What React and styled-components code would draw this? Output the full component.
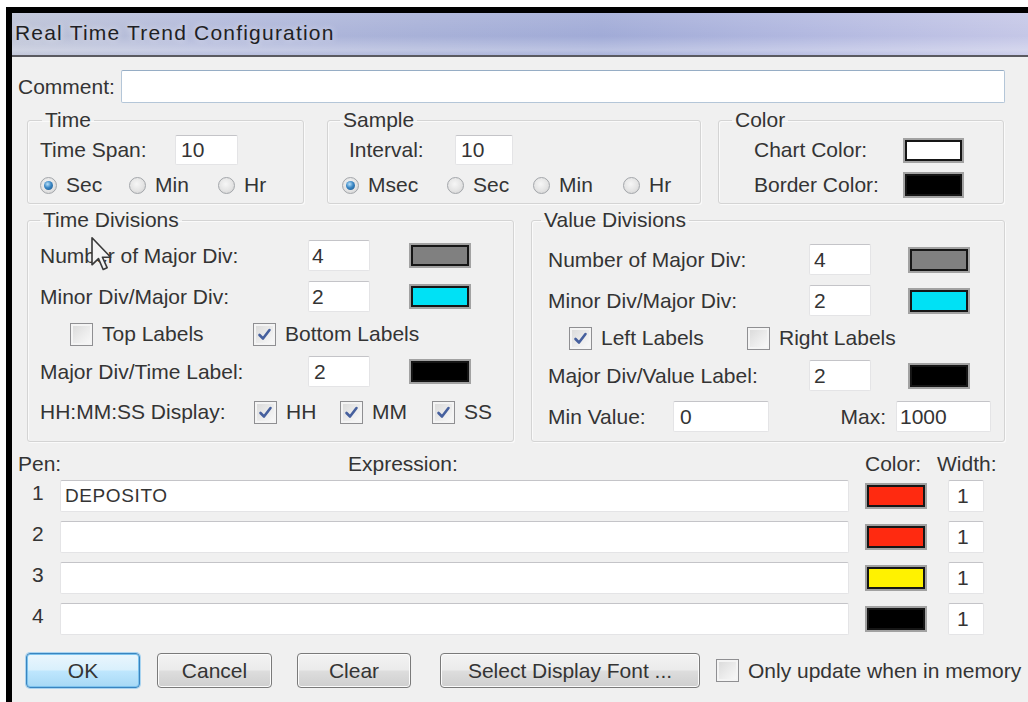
import styled, { createGlobalStyle } from "styled-components";

const GlobalStyle = createGlobalStyle`
  html, body {
    margin: 0;
    padding: 0;
    background: #fff;
  }
  body {
    font-family: "Liberation Sans", Arial, sans-serif;
  }
  * {
    box-sizing: border-box;
  }
`;

const Screen = styled.div`
  position: relative;
  width: 1028px;
  height: 702px;
  padding: 7px 0 0 6px;
  overflow: hidden;
  background: #fff;
`;

const Window = styled.div`
  height: 695px;
  display: flex;
  flex-direction: column;
  border-top: 6px solid #000;
  border-left: 6px solid #000;
  background: #f0f0f0;
`;

const TitleBar = styled.div`
  height: 44px;
  flex: none;
  display: flex;
  align-items: center;
  padding: 0 0 2px 3px;
  border-bottom: 2px solid #5a5a60;
  background:
    linear-gradient(180deg, rgba(255,255,255,0.12) 0%, rgba(255,255,255,0) 55%, rgba(255,255,255,0.28) 88%, rgba(255,255,255,0.1) 100%),
    linear-gradient(90deg, #bcc2d6 0%, #b3badb 18%, #a8b1d8 40%, #a1abd7 58%, #b2b8e0 78%, #c5c7e7 100%);
`;

const Title = styled.span`
  font-size: 21px;
  letter-spacing: 1.2px;
  color: #1f1f24;
  text-shadow: 0 0 6px rgba(255,255,255,0.7);
`;

const Body = styled.div`
  flex: 1;
  padding: 13px 23px 0 6px;
  font-size: 21px;
  color: #343434;
`;

const Row = styled.div`
  display: flex;
  align-items: center;
  height: ${(p) => p.$h || 30}px;
  padding-left: ${(p) => p.$indent || 0}px;
  margin-top: ${(p) => p.$mt || 0}px;
`;

const Label = styled.span`
  flex: none;
  width: ${(p) => (p.$w ? `${p.$w}px` : "auto")};
  margin-left: ${(p) => (p.$push ? "auto" : "0")};
  white-space: nowrap;
`;

const TextBox = styled.input`
  flex: ${(p) => (p.$w ? "none" : "1")};
  width: ${(p) => (p.$w ? `${p.$w}px` : "auto")};
  height: ${(p) => p.$h || 31}px;
  min-width: 0;
  margin-left: ${(p) => p.$ml || 0}px;
  padding: 0 0 0 ${(p) => p.$pad || 5}px;
  font: inherit;
  font-size: ${(p) => p.$fs || 21}px;
  letter-spacing: ${(p) => p.$ls || 0}px;
  color: #343434;
  background: #fff;
  border: 1px solid ${(p) => (p.$blue ? "#b4c6d8" : "#e4e4e6")};
  border-top-color: ${(p) => (p.$blue ? "#96adc5" : "#c4c4c8")};
  border-radius: 2px;
  outline: none;
`;

const TopGroups = styled.div`
  display: flex;
  margin: 7px 1px 0 9px;
`;

const DivGroups = styled.div`
  display: flex;
  align-items: stretch;
  margin: 6px 1px 0 9px;
`;

const Group = styled.fieldset`
  flex: none;
  width: ${(p) => p.$w}px;
  margin: 0 0 0 ${(p) => p.$ml || 0}px;
  padding: ${(p) => p.$pad};
  min-width: 0;
  border: 1px solid #d4d4d4;
  border-radius: 3px;
  box-shadow: inset 1px 1px 0 #fafafa, 1px 1px 0 #fafafa;
`;

/* legend offset is measured from the fieldset's content edge */
const Legend = styled.legend`
  margin-left: ${(p) => p.$indent}px;
  padding: 0 3px;
  line-height: 20px;
  font-size: 21px;
  color: #343434;
`;

const Stack = styled.div`
  display: flex;
  flex-direction: column;
  gap: ${(p) => p.$gap}px;
`;

const Swatch = styled.span`
  flex: none;
  display: inline-block;
  width: ${(p) => p.$w || 62}px;
  height: ${(p) => p.$h || 25}px;
  margin-left: ${(p) => p.$ml || 0}px;
  background: ${(p) => p.$color};
  border: 2px solid #a2a2a2;
  box-shadow: inset 0 0 0 2px #161616;
`;

const Option = styled.label`
  flex: none;
  display: flex;
  align-items: center;
  gap: ${(p) => p.$gap || 9}px;
  width: ${(p) => (p.$w ? `${p.$w}px` : "auto")};
  white-space: nowrap;
`;

const RadioDot = styled.span`
  flex: none;
  position: relative;
  width: 17px;
  height: 17px;
  border-radius: 50%;
  border: 1px solid #a3a6aa;
  background: radial-gradient(circle at 45% 40%, #f6f6f6 0%, #e4e4e4 55%, #cdcdcd 100%);
  &::after {
    content: "";
    display: ${(p) => (p.$on ? "block" : "none")};
    position: absolute;
    left: 3px;
    top: 3px;
    width: 9px;
    height: 9px;
    border-radius: 50%;
    background: radial-gradient(circle at 40% 35%, #b9e1fa 0%, #3a87c4 45%, #184e84 100%);
  }
`;

const CheckBox = styled.span`
  flex: none;
  display: flex;
  align-items: center;
  justify-content: center;
  width: 23px;
  height: 23px;
  border: 1px solid #8f8f92;
  background: linear-gradient(135deg, #d8d8d8 0%, #ececec 55%, #fafafa 100%);
  box-shadow: inset 0 0 0 2px #f4f4f4;
  svg {
    display: block;
  }
`;

const PenSection = styled.div`
  margin-top: 10px;
`;

const PenHeader = styled.div`
  display: grid;
  grid-template-columns: 42px 805px 72px 47px;
  align-items: center;
  height: 24px;
`;

const HeaderCell = styled.span`
  padding-left: ${(p) => p.$pl || 0}px;
  white-space: nowrap;
`;

const PenList = styled.div`
  display: flex;
  flex-direction: column;
  gap: 9px;
  margin-top: 4px;
`;

const PenRow = styled.div`
  display: grid;
  grid-template-columns: 42px 805px 72px 47px;
  align-items: center;
  height: 32px;
`;

const PenNumber = styled.span`
  align-self: start;
  padding: 1px 0 0 14px;
  line-height: 24px;
`;

const WidthCell = styled.div`
  display: flex;
  justify-content: flex-end;
`;

const ButtonBar = styled.div`
  display: flex;
  align-items: center;
  margin-top: 18px;
  padding-left: 8px;
  height: 35px;
`;

const Button = styled.button`
  flex: none;
  width: ${(p) => p.$w}px;
  height: 35px;
  margin-left: ${(p) => p.$ml || 0}px;
  font: inherit;
  font-size: 21px;
  color: #343434;
  border-radius: 4px;
  border: 1px solid ${(p) => (p.$primary ? "#3a84bf" : "#7a7a7a")};
  background: ${(p) =>
    p.$primary
      ? "linear-gradient(180deg, #eaf6fd 0%, #d9f0fc 48%, #bee6fd 52%, #a7d9f5 100%)"
      : "linear-gradient(180deg, #f3f3f3 0%, #ebebeb 48%, #dddddd 52%, #cfcfcf 100%)"};
  box-shadow: ${(p) =>
    p.$primary ? "inset 0 0 0 1px #7cc3ee, 0 0 0 1px #a9d4f0" : "inset 0 0 0 1px #fbfbfb"};
  padding: 0;
`;

const MemoryOption = styled(Option)`
  margin-left: 16px;
`;

const Cursor = styled.svg`
  position: absolute;
  left: 90px;
  top: 236px;
  filter: blur(0.6px);
`;

const Tick = () => (
  <svg width="15" height="15" viewBox="0 0 15 15">
    <path d="M2.5 8 L6 11.5 L12.5 3" fill="none" stroke="#46609e" strokeWidth="2.6" strokeLinecap="round" strokeLinejoin="round" />
  </svg>
);

const Radio = ({ on, w, children }) => (
  <Option $w={w}>
    <RadioDot $on={on} />
    {children}
  </Option>
);

const Check = ({ on, w, children }) => (
  <Option $w={w}>
    <CheckBox>{on && <Tick />}</CheckBox>
    {children}
  </Option>
);

const pens = [
  { n: 1, expr: "DEPOSITO", color: "#ff2a10" },
  { n: 2, expr: "", color: "#ff2a10" },
  { n: 3, expr: "", color: "#fff200" },
  { n: 4, expr: "", color: "#000" },
];

export default function App() {
  return (
    <Screen>
      <GlobalStyle />
      <Window>
        <TitleBar>
          <Title>Real Time Trend Configuration</Title>
        </TitleBar>
        <Body>
          <Row $h={33}>
            <Label $w={103}>Comment:</Label>
            <TextBox $blue $h={33} readOnly defaultValue="" />
          </Row>

          <TopGroups>
            <Group $w={277} $pad="5px 0 3px 12px">
              <Legend $indent={2}>Time</Legend>
              <Stack $gap={5}>
                <Row>
                  <Label $w={135}>Time Span:</Label>
                  <TextBox $w={63} $h={30} readOnly defaultValue="10" />
                </Row>
                <Row>
                  <Radio on w={89}>Sec</Radio>
                  <Radio w={89}>Min</Radio>
                  <Radio>Hr</Radio>
                </Row>
              </Stack>
            </Group>

            <Group $w={374} $ml={23} $pad="5px 0 3px 14px">
              <Legend $indent={-2}>Sample</Legend>
              <Stack $gap={5}>
                <Row $indent={7}>
                  <Label $w={106}>Interval:</Label>
                  <TextBox $w={58} $h={30} readOnly defaultValue="10" />
                </Row>
                <Row>
                  <Radio on w={105}>Msec</Radio>
                  <Radio w={86}>Sec</Radio>
                  <Radio w={90}>Min</Radio>
                  <Radio>Hr</Radio>
                </Row>
              </Stack>
            </Group>

            <Group $w={286} $ml={17} $pad="5px 0 3px 35px">
              <Legend $indent={-22}>Color</Legend>
              <Stack $gap={5}>
                <Row>
                  <Label $w={149}>Chart Color:</Label>
                  <Swatch $w={61} $color="#fff" />
                </Row>
                <Row>
                  <Label $w={149}>Border Color:</Label>
                  <Swatch $w={61} $h={26} $color="#000" />
                </Row>
              </Stack>
            </Group>
          </TopGroups>

          <DivGroups>
            <Group $w={487} $pad="10px 0 14px 12px">
              <Legend $indent={0}>Time Divisions</Legend>
              <Stack $gap={10}>
                <Row $h={31}>
                  <Label $w={268}>Number of Major Div:</Label>
                  <TextBox $w={62} $pad={3} readOnly defaultValue="4" />
                  <Swatch $ml={39} $color="#808080" />
                </Row>
                <Row $h={31}>
                  <Label $w={268}>Minor Div/Major Div:</Label>
                  <TextBox $w={62} $pad={3} readOnly defaultValue="2" />
                  <Swatch $ml={39} $color="#00e1f5" />
                </Row>
                <Row $h={24} $indent={30}>
                  <Check w={183}>Top Labels</Check>
                  <Check on>Bottom Labels</Check>
                </Row>
                <Row $h={31}>
                  <Label $w={268}>Major Div/Time Label:</Label>
                  <TextBox $w={62} $pad={5} readOnly defaultValue="2" />
                  <Swatch $ml={39} $color="#000" />
                </Row>
                <Row $h={24} $mt={3}>
                  <Label $w={214}>HH:MM:SS Display:</Label>
                  <Check on w={86}>HH</Check>
                  <Check on w={92}>MM</Check>
                  <Check on>SS</Check>
                </Row>
              </Stack>
            </Group>

            <Group $w={474} $ml={17} $pad="14px 13px 9px 16px">
              <Legend $indent={-7}>Value Divisions</Legend>
              <Stack $gap={10}>
                <Row $h={31}>
                  <Label $w={261}>Number of Major Div:</Label>
                  <TextBox $w={62} $pad={4} readOnly defaultValue="4" />
                  <Swatch $ml={37} $h={26} $color="#808080" />
                </Row>
                <Row $h={31}>
                  <Label $w={261}>Minor Div/Major Div:</Label>
                  <TextBox $w={62} $pad={4} readOnly defaultValue="2" />
                  <Swatch $ml={37} $h={26} $color="#00e1f5" />
                </Row>
                <Row $h={24} $indent={21}>
                  <Check on w={178}>Left Labels</Check>
                  <Check>Right Labels</Check>
                </Row>
                <Row $h={31}>
                  <Label $w={261}>Major Div/Value Label:</Label>
                  <TextBox $w={62} $pad={4} readOnly defaultValue="2" />
                  <Swatch $ml={37} $h={26} $color="#000" />
                </Row>
                <Row $h={31}>
                  <Label $w={125}>Min Value:</Label>
                  <TextBox $w={96} $pad={6} readOnly defaultValue="0" />
                  <Label $push>Max:</Label>
                  <TextBox $w={95} $pad={3} $ml={10} readOnly defaultValue="1000" />
                </Row>
              </Stack>
            </Group>
          </DivGroups>

          <PenSection>
            <PenHeader>
              <HeaderCell>Pen:</HeaderCell>
              <HeaderCell $pl={288}>Expression:</HeaderCell>
              <HeaderCell>Color:</HeaderCell>
              <HeaderCell>Width:</HeaderCell>
            </PenHeader>
            <PenList>
              {pens.map((pen) => (
                <PenRow key={pen.n}>
                  <PenNumber>{pen.n}</PenNumber>
                  <TextBox
                    $w={789}
                    $h={32}
                    $pad={4}
                    $fs={19}
                    $ls={0.6}
                    readOnly
                    defaultValue={pen.expr}
                  />
                  <Swatch $w={62} $h={26} $color={pen.color} />
                  <WidthCell>
                    <TextBox $w={36} $h={32} $pad={8} readOnly defaultValue="1" />
                  </WidthCell>
                </PenRow>
              ))}
            </PenList>
          </PenSection>

          <ButtonBar>
            <Button $primary $w={114}>OK</Button>
            <Button $w={115} $ml={17}>Cancel</Button>
            <Button $w={114} $ml={25}>Clear</Button>
            <Button $w={260} $ml={29}>Select Display Font ...</Button>
            <MemoryOption>
              <CheckBox />
              Only update when in memory
            </MemoryOption>
          </ButtonBar>
        </Body>
      </Window>

      <Cursor width="22" height="36" viewBox="0 0 12 20">
        <path
          d="M1 1 L1 16 L4.6 12.6 L7.2 18.6 L9.4 17.6 L6.8 11.8 L11.4 11.8 Z"
          fill="#f4f4f4"
          stroke="#3a3a3a"
          strokeWidth="0.9"
          strokeLinejoin="round"
        />
      </Cursor>
    </Screen>
  );
}
